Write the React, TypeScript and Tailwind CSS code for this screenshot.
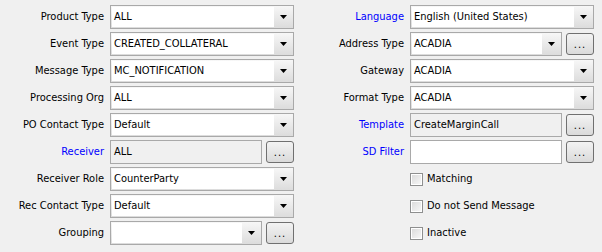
import React from "react"

const font = { fontFamily: '"DejaVu Sans Condensed", Tahoma, "Liberation Sans", sans-serif' }

function Label(props: { text: string; link?: boolean }) {
  return (
    <div className={"w-[104px] shrink-0 text-right text-[11px] " + (props.link ? "text-[#0000ff]" : "text-black")}>
      {props.text}
    </div>
  )
}

function Arrow() {
  return (
    <div className="flex w-[18px] shrink-0 items-center justify-center">
      <svg width="7" height="4" viewBox="0 0 7 4">
        <path d="M0 0h7L3.5 4z" fill="#000" />
      </svg>
    </div>
  )
}

function Combo(props: { value?: string; width: string }) {
  return (
    <div className={"flex h-[24px] border border-[#a9a9a9] bg-gradient-to-b from-[#f7f7f7] to-[#dcdcdc] p-px " + props.width}>
      <div className="flex flex-1 items-center bg-white pl-[2px] text-[11px] text-black">{props.value}</div>
      <Arrow />
    </div>
  )
}

function Field(props: { value?: string; white?: boolean }) {
  return (
    <div
      className={
        "flex h-[24px] w-[152px] items-center border border-[#a9a9a9] pl-[3px] text-[11px] text-black " +
        (props.white ? "bg-white" : "bg-[#f0f0f0]")
      }
    >
      {props.value}
    </div>
  )
}

function Dots() {
  return (
    <div className="ml-[4px] flex h-[22px] w-[28px] items-end justify-center rounded-[3px] border border-[#707070] bg-gradient-to-b from-[#f3f3f3] to-[#dadada] pb-[5px]">
      <span className="text-[11px] leading-[8px] tracking-[1px] text-black">...</span>
    </div>
  )
}

function Row(props: { children: React.ReactNode }) {
  return <div className="flex h-[24px] items-center gap-[6px]">{props.children}</div>
}

function Check(props: { text: string }) {
  return (
    <div className="flex items-center gap-[4px]">
      <div className="flex h-[13px] w-[13px] items-center justify-center border border-[#8e8f8f] bg-white">
        <div className="h-[9px] w-[9px] bg-gradient-to-br from-[#dcdcdc] to-[#f6f6f6]" />
      </div>
      <span className="text-[11px] text-black">{props.text}</span>
    </div>
  )
}

export default function App() {
  return (
    <div className="h-[252px] w-[602px] bg-[#f0f0f0] pt-[5px]" style={font}>
      <div className="flex">
        <div className="flex w-[300px] flex-col gap-[3px]">
          <Row><Label text="Product Type" /><Combo value="ALL" width="w-[184px]" /></Row>
          <Row><Label text="Event Type" /><Combo value="CREATED_COLLATERAL" width="w-[184px]" /></Row>
          <Row><Label text="Message Type" /><Combo value="MC_NOTIFICATION" width="w-[184px]" /></Row>
          <Row><Label text="Processing Org" /><Combo value="ALL" width="w-[184px]" /></Row>
          <Row><Label text="PO Contact Type" /><Combo value="Default" width="w-[184px]" /></Row>
          <Row>
            <Label text="Receiver" link />
            <div className="flex items-center"><Field value="ALL" /><Dots /></div>
          </Row>
          <Row><Label text="Receiver Role" /><Combo value="CounterParty" width="w-[184px]" /></Row>
          <Row><Label text="Rec Contact Type" /><Combo value="Default" width="w-[184px]" /></Row>
          <Row>
            <Label text="Grouping" />
            <div className="flex items-center"><Combo width="w-[152px]" /><Dots /></div>
          </Row>
        </div>
        <div className="flex w-[300px] flex-col gap-[3px]">
          <Row><Label text="Language" link /><Combo value="English (United States)" width="w-[184px]" /></Row>
          <Row>
            <Label text="Address Type" />
            <div className="flex items-center"><Combo value="ACADIA" width="w-[152px]" /><Dots /></div>
          </Row>
          <Row><Label text="Gateway" /><Combo value="ACADIA" width="w-[184px]" /></Row>
          <Row><Label text="Format Type" /><Combo value="ACADIA" width="w-[184px]" /></Row>
          <Row>
            <Label text="Template" link />
            <div className="flex items-center"><Field value="CreateMarginCall" /><Dots /></div>
          </Row>
          <Row>
            <Label text="SD Filter" link />
            <div className="flex items-center"><Field white /><Dots /></div>
          </Row>
          <Row><div className="w-[104px]" /><Check text="Matching" /></Row>
          <Row><div className="w-[104px]" /><Check text="Do not Send Message" /></Row>
          <Row><div className="w-[104px]" /><Check text="Inactive" /></Row>
        </div>
      </div>
    </div>
  )
}
